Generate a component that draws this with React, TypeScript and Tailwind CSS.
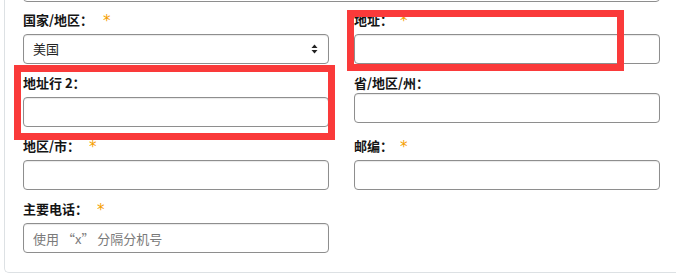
import React from "react";

const font = { fontFamily: '"Noto Sans CJK SC", "Liberation Sans", sans-serif' };

function Label({ text, req, gap = "ml-[10px]", mb = "mb-[4px]" }: { text: string; req?: boolean; gap?: string; mb?: string }) {
  return (
    <div className={`h-[20px] leading-[20px] text-[13px] font-bold text-[#141414] whitespace-nowrap ${mb}`}>
      {text}
      {req && (
        <span
          className={`${gap} text-[15px] font-normal text-[#f59e00] relative top-[1px]`}
          style={{ fontFamily: '"DejaVu Sans", sans-serif' }}
        >
          *
        </span>
      )}
    </div>
  );
}

const inputCls =
  "block w-full h-[30px] border border-[#8e8e8e] rounded-[4px] bg-white shadow-[inset_0_1px_1px_rgba(0,0,0,0.09)] px-[9px] text-[13px] text-[#222] outline-none placeholder:text-[#7a7a7a]";

export default function App() {
  return (
    <div className="relative w-[676px] h-[274px] overflow-hidden bg-white" style={font}>
      <div className="ml-[4px] w-[720px] border-l border-b border-[#dde1e4] rounded-bl-[5px] pl-[18px] pb-[19px]">
        <div className="w-[637px] h-[30px] mt-[-28px] border border-[#8e8e8e] rounded-[4px]" />
        <div className="mt-[8px] grid grid-cols-[306px_306px] gap-x-[25px] gap-y-[9px] items-start">
          <div>
            <Label text="国家/地区：" req gap="ml-[10px]" />
            <div className="relative">
              <select className={`${inputCls} appearance-none`} defaultValue="us" style={font}>
                <option value="us">美国</option>
              </select>
              <svg className="absolute right-[11px] top-[10px]" width="7" height="10" viewBox="0 0 7 10">
                <path d="M3.5 0.5 L6.5 4 L0.5 4 Z" fill="#222" />
                <path d="M0.5 6 L6.5 6 L3.5 9.5 Z" fill="#222" />
              </svg>
            </div>
          </div>
          <div>
            <Label text="地址：" req gap="ml-[7px]" />
            <input className={inputCls} />
          </div>
          <div>
            <Label text="地址行 2：" />
            <input className={`${inputCls} mt-[4px]`} />
          </div>
          <div>
            <Label text="省/地区/州：" mb="mb-0" />
            <input className={inputCls} />
          </div>
          <div>
            <Label text="地区/市：" req gap="ml-[9px]" />
            <input className={inputCls} />
          </div>
          <div>
            <Label text="邮编：" req gap="ml-[7px]" />
            <input className={inputCls} />
          </div>
          <div>
            <Label text="主要电话：" req gap="ml-[9px]" />
            <input className={inputCls} placeholder="使用 “x” 分隔分机号" style={font} />
          </div>
        </div>
      </div>
      <div className="absolute left-[347px] top-[10px] w-[277px] h-[61px] border-[7px] border-[#fa3a3a] pointer-events-none" />
      <div className="absolute left-[14px] top-[65px] w-[321px] h-[75px] border-[7px] border-[#fa3a3a] pointer-events-none" />
    </div>
  );
}
